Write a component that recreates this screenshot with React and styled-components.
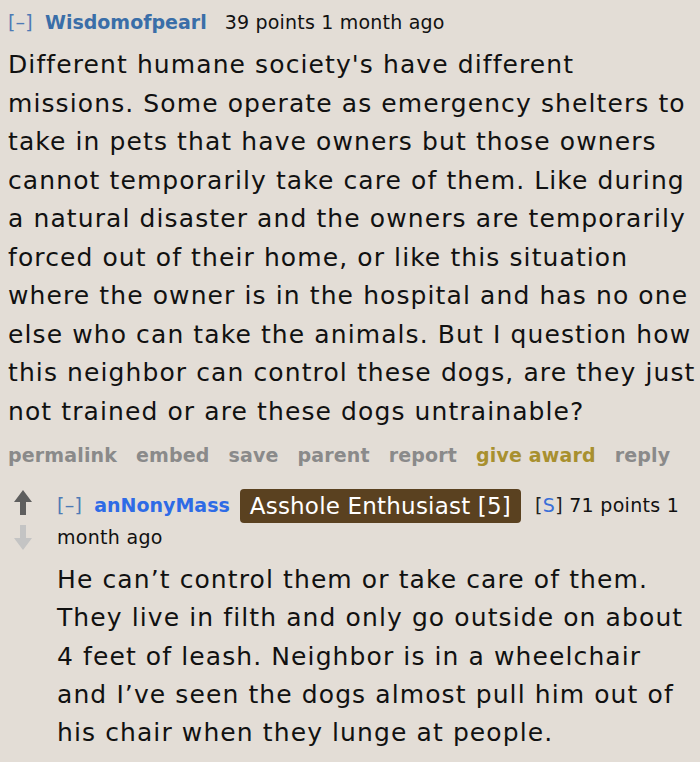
import React from 'react';
import styled, { createGlobalStyle } from 'styled-components';

const GlobalStyle = createGlobalStyle`
  html, body {
    margin: 0;
    padding: 0;
    background-color: #e3ddd6;
  }
  body {
    font-family: "DejaVu Sans", Verdana, sans-serif;
    color: #111;
  }
`;

const Page = styled.div`
  width: 700px;
  height: 762px;
  overflow: hidden;
  padding: 8px 0 0 8px;
  box-sizing: border-box;
`;

const Tagline = styled.div`
  font-size: 19px;
  line-height: 28px;
  letter-spacing: 0.2px;
  white-space: nowrap;
`;

const Toggle = styled.span`
  color: #4e7ab5;
  margin-right: 12px;
`;

const Author = styled.span`
  color: ${(p) => p.color || '#3a6ea8'};
  font-weight: bold;
  letter-spacing: 0;
  margin-right: ${(p) => p.gap || 18}px;
`;

const Body = styled.div`
  font-size: 25px;
  line-height: ${(p) => p.lh || 38.5}px;
  letter-spacing: 1.1px;
  margin-top: ${(p) => p.top || 4}px;
  white-space: nowrap;
`;

const Actions = styled.ul`
  display: flex;
  gap: 19px;
  list-style: none;
  margin: 10px 0 0;
  padding: 0;
  font-size: 19px;
  font-weight: bold;
  line-height: 28px;
  letter-spacing: 0.15px;
`;

const Action = styled.li`
  color: ${(p) => (p.gold ? '#a8902f' : '#8a8a8a')};
`;

const Child = styled.div`
  display: flex;
  margin-top: 20px;
`;

const Votes = styled.div`
  width: 49px;
  box-sizing: border-box;
  display: flex;
  flex-direction: column;
  align-items: flex-start;
  padding-left: 6px;
  padding-top: 1px;
  gap: 10px;
`;

const Entry = styled.div`
  flex: 1;
`;

const ChildTagline = styled.div`
  font-size: 19px;
  line-height: 28px;
  letter-spacing: 0.3px;
`;

const Flair = styled.span`
  display: inline-block;
  background: #5a4120;
  color: #fff;
  font-family: "DejaVu Sans", Verdana, sans-serif;
  font-size: 23px;
  line-height: 34px;
  letter-spacing: 0.2px;
  padding: 0 10px;
  border-radius: 4px;
  margin-right: 14px;
  vertical-align: middle;
`;

const Sub = styled.span`
  color: #222;
  & > b {
    color: #3a6fd8;
    font-weight: normal;
  }
`;

const Arrow = ({ down, color }) => (
  <svg width="18" height="25" viewBox="0 0 18 25">
    <path
      d="M9 0 L18 12 L12 12 L12 25 L6 25 L6 12 L0 12 Z"
      fill={color}
      transform={down ? 'rotate(180 9 12.5)' : undefined}
    />
  </svg>
);

export default function App() {
  return (
    <Page>
      <GlobalStyle />
      <Tagline>
        <Toggle>[–]</Toggle>
        <Author>Wisdomofpearl</Author>
        39 points 1 month ago
      </Tagline>
      <Body top={10}>
        Different humane society's have different<br />
        missions. Some operate as emergency shelters to<br />
        take in pets that have owners but those owners<br />
        cannot temporarily take care of them. Like during<br />
        a natural disaster and the owners are temporarily<br />
        forced out of their home, or like this situation<br />
        where the owner is in the hospital and has no one<br />
        else who can take the animals. But I question how<br />
        this neighbor can control these dogs, are they just<br />
        not trained or are these dogs untrainable?
      </Body>
      <Actions>
        <Action>permalink</Action>
        <Action>embed</Action>
        <Action>save</Action>
        <Action>parent</Action>
        <Action>report</Action>
        <Action gold>give award</Action>
        <Action>reply</Action>
      </Actions>
      <Child>
        <Votes>
          <Arrow color="#5e5e5e" />
          <Arrow down color="#c4c4c4" />
        </Votes>
        <Entry>
          <ChildTagline>
            <Toggle>[–]</Toggle>
            <Author color="#2e6be6" gap={10}>anNonyMass</Author>
            <Flair>Asshole Enthusiast [5]</Flair>
            <Sub>[<b>S</b>]</Sub> 71 points 1<br />
            month ago
          </ChildTagline>
          <Body top={10} lh={38.25}>
            He can’t control them or take care of them.<br />
            They live in filth and only go outside on about<br />
            4 feet of leash. Neighbor is in a wheelchair<br />
            and I’ve seen the dogs almost pull him out of<br />
            his chair when they lunge at people.
          </Body>
        </Entry>
      </Child>
    </Page>
  );
}
